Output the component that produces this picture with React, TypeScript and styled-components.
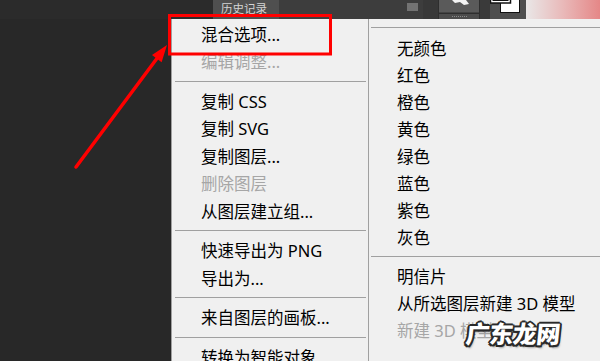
import React from "react";
import styled, { createGlobalStyle } from "styled-components";

const GlobalStyle = createGlobalStyle`
  html, body { margin: 0; padding: 0; background: #282828; }
  body { width: 600px; height: 361px; overflow: hidden; }
  #root { width: 600px; height: 361px; }
`;

const Page = styled.div`
  position: relative;
  width: 600px;
  height: 361px;
  overflow: hidden;
  display: grid;
  grid-template-rows: 19px 1fr;
  background: #282828;
  font-family: "Noto Sans", "Noto Sans CJK SC", sans-serif;
`;

const TopBar = styled.div`
  display: flex;
  height: 19px;
`;

const BarBlock = styled.div<{ $w: number; $bg: string }>`
  flex: 0 0 ${(p) => p.$w}px;
  background: ${(p) => p.$bg};
  height: 19px;
  position: relative;
  overflow: hidden;
  display: flex;
`;

const Tab = styled.div`
  flex: 0 0 66px;
  background: #4f4f4f;
  color: #d4d4d4;
  font-size: 11.5px;
  line-height: 17px;
  padding-left: 8px;
  box-sizing: border-box;
  font-family: "Noto Sans CJK SC", sans-serif;
`;

const PanelHead = styled.div`
  flex: 0 0 144px;
  background: #3d3d3d;
  display: flex;
  justify-content: flex-end;
  align-items: flex-start;
  padding: 3px 5px 0 0;
  box-sizing: border-box;
`;

const Gradient = styled.div`
  flex: 1;
  background: linear-gradient(90deg, #e9e7e7 0%, #e9b9b9 50%, #e58787 100%);
`;

const Body = styled.div`
  display: flex;
  min-height: 0;
`;

const Canvas = styled.div`
  flex: 0 0 171px;
  background: #282828;
`;

const Menu = styled.div`
  flex: 1;
  display: flex;
  background: #f0f0f0;
  min-height: 0;
`;

const MainColumn = styled.div`
  flex: 0 0 198px;
  box-sizing: border-box;
  border-left: 1px solid #a0a0a0;
  border-right: 1px solid #a0a0a0;
  padding-top: 1px;
  display: flex;
  flex-direction: column;
`;

const SubColumn = styled.div`
  flex: 1;
  margin-top: 8px;
  margin-left: 2px;
  border-top: 1px solid #a0a0a0;
  padding-top: 6px;
  display: flex;
  flex-direction: column;
`;

const Item = styled.div<{ $disabled?: boolean; $h: number; $pad: number }>`
  flex: 0 0 ${(p) => p.$h}px;
  height: ${(p) => p.$h}px;
  display: flex;
  align-items: center;
  padding-left: ${(p) => p.$pad}px;
  font-size: 16.5px;
  color: ${(p) => (p.$disabled ? "#a6a6a6" : "#000")};
  white-space: nowrap;
`;

const Separator = styled.div<{ $l: number; $r: number }>`
  flex: 0 0 12px;
  display: flex;
  align-items: center;
  padding: 0 ${(p) => p.$r}px 0 ${(p) => p.$l}px;
  &::after {
    content: "";
    flex: 1;
    height: 1px;
    background: #a0a0a0;
  }
`;

const Overlay = styled.svg`
  position: absolute;
  left: 0;
  top: 0;
  pointer-events: none;
`;

const Watermark = styled.div`
  position: absolute;
  left: 466px;
  top: 315px;
  font-family: "Noto Sans CJK SC", sans-serif;
  font-weight: 900;
  font-size: 24px;
  letter-spacing: -0.5px;
  color: #fff;
  transform: skewX(-6deg);
  text-shadow:
    -1.5px -1.5px 0 #2a2a2a, 1.5px -1.5px 0 #2a2a2a, -1.5px 1.5px 0 #2a2a2a,
    1.5px 1.5px 0 #2a2a2a, 0 2px 0 #2a2a2a, 0 -2px 0 #2a2a2a, 2px 0 0 #2a2a2a,
    -2px 0 0 #2a2a2a, 2px 3px 2px rgba(0, 0, 0, 0.35);
`;

type Entry = { label?: string; disabled?: boolean; sep?: boolean };

const mainItems: Entry[] = [
  { label: "混合选项..." },
  { label: "编辑调整...", disabled: true },
  { sep: true },
  { label: "复制 CSS" },
  { label: "复制 SVG" },
  { label: "复制图层..." },
  { label: "删除图层", disabled: true },
  { label: "从图层建立组..." },
  { sep: true },
  { label: "快速导出为 PNG" },
  { label: "导出为..." },
  { sep: true },
  { label: "来自图层的画板..." },
  { sep: true },
  { label: "转换为智能对象" },
];

const subItems: Entry[] = [
  { label: "无颜色" },
  { label: "红色" },
  { label: "橙色" },
  { label: "黄色" },
  { label: "绿色" },
  { label: "蓝色" },
  { label: "紫色" },
  { label: "灰色" },
  { sep: true },
  { label: "明信片" },
  { label: "从所选图层新建 3D 模型" },
  { label: "新建 3D 模型", disabled: true },
];

const Hamburger = () => (
  <svg width="11" height="8" viewBox="0 0 11 8">
    {[0.5, 2.5, 4.5, 6.5].map((y) => (
      <rect key={y} x="0" y={y} width="11" height="1" fill="#a9a9a9" />
    ))}
  </svg>
);

const ToolIcon = () => (
  <svg width="42" height="19" viewBox="0 0 42 19">
    <rect x="0.5" y="-1" width="41" height="14" fill="#5a5a5a" stroke="#2e2e2e" />
    <rect x="0.5" y="13.5" width="41" height="6" fill="#4c4c4c" stroke="#2e2e2e" />
    <path d="M14 0 L28 0 L31 4 L26 5 L22 2 L17 3 Z" fill="#f4f4f4" />
    {[14, 16, 18, 20, 22, 24, 26, 28].map((x) => (
      <rect key={x} x={x} y="16" width="1" height="1" fill="#8a8a8a" />
    ))}
  </svg>
);

const Swatches = () => (
  <svg width="36" height="19" viewBox="0 0 36 19">
    <rect x="10.5" y="-2" width="19" height="14.5" fill="#fff" stroke="#111" />
    <rect x="0.5" y="-3" width="20" height="6" fill="#fff" stroke="#111" strokeWidth="1.5" />
    <rect x="2.5" y="-3" width="16" height="4" fill="#111" />
  </svg>
);

function renderEntries(list: Entry[], h: number, pad: number, sl: number, sr: number) {
  return list.map((e, i) =>
    e.sep ? (
      <Separator key={i} $l={sl} $r={sr} />
    ) : (
      <Item key={i} $h={h} $pad={pad} $disabled={e.disabled}>
        {e.label}
      </Item>
    )
  );
}

export default function App() {
  return (
    <>
      <GlobalStyle />
      <Page>
        <TopBar>
          <BarBlock $w={213} $bg="#2b2b2b" />
          <Tab>历史记录</Tab>
          <PanelHead>
            <Hamburger />
          </PanelHead>
          <BarBlock $w={15} $bg="#383838" />
          <BarBlock $w={42} $bg="#5a5a5a">
            <ToolIcon />
          </BarBlock>
          <BarBlock $w={10} $bg="#3a3a3a" />
          <BarBlock $w={36} $bg="#4e4e4e">
            <Swatches />
          </BarBlock>
          <Gradient />
        </TopBar>
        <Body>
          <Canvas />
          <Menu>
            <MainColumn>{renderEntries(mainItems, 27.5, 29, 3, 2)}</MainColumn>
            <SubColumn>{renderEntries(subItems, 27, 26, 0, 0)}</SubColumn>
          </Menu>
        </Body>
        <Overlay width="600" height="361" viewBox="0 0 600 361">
          <rect x="169.5" y="15.5" width="161" height="38.5" fill="none" stroke="#ff0000" strokeWidth="3" />
          <line x1="76" y1="167" x2="158" y2="57" stroke="#ff0000" strokeWidth="3.5" strokeLinecap="round" />
          <polygon points="167,45 152,55 161.6,62.2" fill="#ff0000" />
        </Overlay>
        <Watermark>广东龙网</Watermark>
      </Page>
    </>
  );
}
